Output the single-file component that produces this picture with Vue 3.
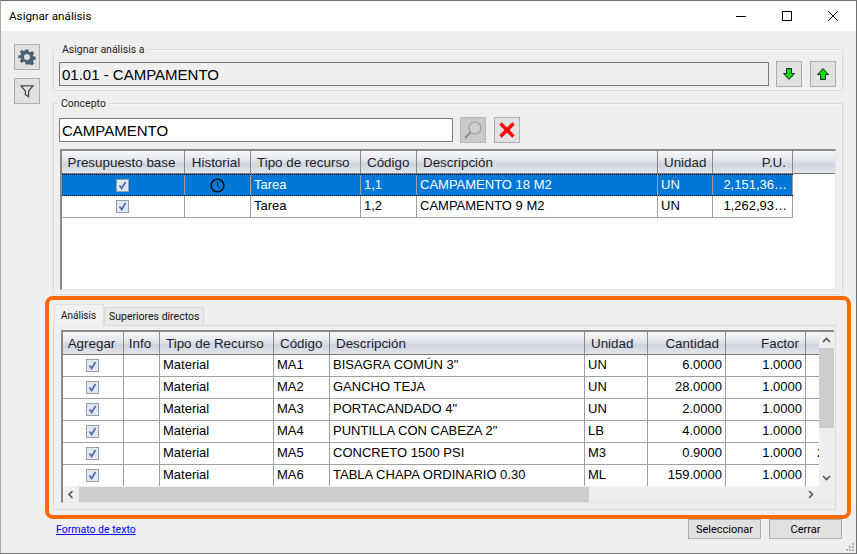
<script setup>
const conceptos = [
  { tipo: 'Tarea', codigo: '1,1', desc: 'CAMPAMENTO 18 M2', unidad: 'UN', pu: '2,151,36…', selected: true },
  { tipo: 'Tarea', codigo: '1,2', desc: 'CAMPAMENTO 9 M2', unidad: 'UN', pu: '1,262,93…', selected: false },
]

const analisis = [
  { codigo: 'MA1', desc: 'BISAGRA COMÚN 3"', unidad: 'UN', cantidad: '6.0000' },
  { codigo: 'MA2', desc: 'GANCHO TEJA', unidad: 'UN', cantidad: '28.0000' },
  { codigo: 'MA3', desc: 'PORTACANDADO 4"', unidad: 'UN', cantidad: '2.0000' },
  { codigo: 'MA4', desc: 'PUNTILLA CON CABEZA 2"', unidad: 'LB', cantidad: '4.0000' },
  { codigo: 'MA5', desc: 'CONCRETO 1500 PSI', unidad: 'M3', cantidad: '0.9000', extra: '2' },
  { codigo: 'MA6', desc: 'TABLA CHAPA ORDINARIO 0.30', unidad: 'ML', cantidad: '159.0000' },
]
</script>

<template>
  <div class="window">
    <!-- barra de titulo -->
    <header class="titlebar">
      <span class="title">Asignar análisis</span>
      <div class="controls">
        <svg width="46" height="30" viewBox="0 0 46 30"><path d="M18 15.5h10" stroke="#000" fill="none" /></svg>
        <svg width="46" height="30" viewBox="0 0 46 30"><rect x="18.5" y="10.5" width="9" height="9" stroke="#000" fill="none" /></svg>
        <svg width="46" height="30" viewBox="0 0 46 30"><path d="M18 10l10 10M28 10L18 20" stroke="#000" fill="none" /></svg>
      </div>
    </header>

    <div class="body">
      <aside class="rail">
        <button class="icon-btn">
          <svg width="18" height="18" viewBox="0 0 24 24">
            <path fill="#4c6272" fill-rule="evenodd" d="M10 2h4l.5 2.9 1.9.8 2.4-1.7 2.8 2.8-1.7 2.4.8 1.9 2.9.5v4l-2.9.5-.8 1.9 1.7 2.4-2.8 2.8-2.4-1.7-1.9.8L14 22h-4l-.5-2.9-1.9-.8-2.4 1.7-2.8-2.8 1.7-2.4-.8-1.9L.4 14v-4l2.9-.5.8-1.9L2.4 5.2 5.2 2.4l2.4 1.7 1.9-.8zM12 8a4 4 0 1 0 0 8 4 4 0 0 0 0-8z" />
          </svg>
        </button>
        <button class="icon-btn">
          <svg width="16" height="16" viewBox="0 0 20 20">
            <path d="M2.5 3.5h15L12 10v7l-4-2.500V10z" fill="#e4e4e4" stroke="#444" stroke-width="1.5" />
          </svg>
        </button>
      </aside>

      <main class="content">
        <fieldset class="group group-asignar">
          <legend>Asignar análisis a</legend>
          <div class="field-row">
            <input class="text-input readonly" value="01.01 - CAMPAMENTO" readonly />
            <button class="icon-btn">
              <svg width="14" height="14" viewBox="0 0 14 14"><path d="M4.5 1.5h5v5h3L7 12.5 1.5 6.5h3z" fill="#00e000" stroke="#222" /></svg>
            </button>
            <button class="icon-btn">
              <svg width="14" height="14" viewBox="0 0 14 14"><path d="M4.5 12.5h5v-5h3L7 1.5 1.5 7.5h3z" fill="#00e000" stroke="#222" /></svg>
            </button>
          </div>
        </fieldset>

        <fieldset class="group group-concepto">
          <legend>Concepto</legend>
          <div class="field-row">
            <input class="text-input concept" value="CAMPAMENTO" />
            <button class="icon-btn disabled">
              <svg width="22" height="22" viewBox="0 0 22 22">
                <circle cx="13" cy="9" r="6" fill="#cfcfcf" stroke="#a8a8a8" stroke-width="1.5" />
                <path d="M8.5 13.5L3 19" stroke="#8b968b" stroke-width="2.4" />
              </svg>
            </button>
            <button class="icon-btn">
              <svg width="18" height="18" viewBox="0 0 18 18"><path d="M2.5 2.5l13 13M15.5 2.5l-13 13" stroke="#f00" stroke-width="3.4" /></svg>
            </button>
          </div>

          <div class="grid-top">
            <div class="row head">
              <div class="cell center">Presupuesto base</div>
              <div class="cell center">Historial</div>
              <div class="cell hp">Tipo de recurso</div>
              <div class="cell hp">Código</div>
              <div class="cell hp">Descripción</div>
              <div class="cell hp">Unidad</div>
              <div class="cell right">P.U.</div>
              <div class="cell filler"></div>
            </div>
            <div v-for="c in conceptos" :key="c.codigo" class="row" :class="{ selected: c.selected }">
              <div class="cell center">
                <svg class="check" width="13" height="13" viewBox="0 0 13 13">
                  <rect x=".5" y=".5" width="12" height="12" fill="#e2e8f3" stroke="#9a9fa6" />
                  <path d="M3.5 6.5l2.2 3 3.8-6.5" fill="none" stroke="#4a6cab" stroke-width="1.7" />
                </svg>
              </div>
              <div class="cell center">
                <svg v-if="c.selected" width="15" height="15" viewBox="0 0 15 15">
                  <circle cx="7.5" cy="7.5" r="6.4" fill="none" stroke="#000" stroke-width="1.4" />
                  <path d="M7.5 4v3.500l2 1.800" fill="none" stroke="#000" />
                </svg>
              </div>
              <div class="cell">{{ c.tipo }}</div>
              <div class="cell">{{ c.codigo }}</div>
              <div class="cell">{{ c.desc }}</div>
              <div class="cell">{{ c.unidad }}</div>
              <div class="cell right">{{ c.pu }}</div>
            </div>
          </div>
        </fieldset>

        <section class="tabs">
          <div class="tab-strip">
            <div class="tab active">Análisis</div>
            <div class="tab">Superiores directos</div>
          </div>
          <div class="tab-panel">
            <div class="grid-bottom">
              <div class="viewport">
                <div class="row head">
                  <div class="cell center">Agregar</div>
                  <div class="cell center">Info</div>
                  <div class="cell hp">Tipo de Recurso</div>
                  <div class="cell hp">Código</div>
                  <div class="cell hp">Descripción</div>
                  <div class="cell hp">Unidad</div>
                  <div class="cell right">Cantidad</div>
                  <div class="cell right">Factor</div>
                  <div class="cell filler"></div>
                </div>
                <div v-for="a in analisis" :key="a.codigo" class="row">
                  <div class="cell center">
                    <svg class="check" width="13" height="13" viewBox="0 0 13 13">
                      <rect x=".5" y=".5" width="12" height="12" fill="#e2e8f3" stroke="#9a9fa6" />
                      <path d="M3.5 6.5l2.2 3 3.8-6.5" fill="none" stroke="#4a6cab" stroke-width="1.7" />
                    </svg>
                  </div>
                  <div class="cell"></div>
                  <div class="cell">Material</div>
                  <div class="cell">{{ a.codigo }}</div>
                  <div class="cell">{{ a.desc }}</div>
                  <div class="cell">{{ a.unidad }}</div>
                  <div class="cell right tight">{{ a.cantidad }}</div>
                  <div class="cell right tight">1.0000</div>
                  <div class="cell extra">{{ a.extra }}</div>
                </div>
              </div>
              <div class="vbar">
                <svg class="arrow" width="15" height="16" viewBox="0 0 15 16"><path d="M4 10l3.500-3.500L11 10" fill="none" stroke="#555" stroke-width="1.6" /></svg>
                <div class="vthumb"></div>
                <div class="spacer"></div>
                <svg class="arrow" width="15" height="16" viewBox="0 0 15 16"><path d="M4 6l3.500 3.500L11 6" fill="none" stroke="#555" stroke-width="1.6" /></svg>
              </div>
              <div class="hbar">
                <svg class="arrow" width="16" height="16" viewBox="0 0 16 16"><path d="M9.500 5L6 8.500l3.500 3.500" fill="none" stroke="#555" stroke-width="1.6" /></svg>
                <div class="hthumb"></div>
                <div class="spacer"></div>
                <svg class="arrow" width="17" height="16" viewBox="0 0 17 16"><path d="M7 5l3.500 3.500L7 12" fill="none" stroke="#555" stroke-width="1.6" /></svg>
              </div>
              <div class="corner"></div>
            </div>
          </div>
        </section>

        <footer class="footer">
          <a class="link" href="#">Formato de texto</a>
          <div class="footer-btns">
            <button class="btn">Seleccionar</button>
            <button class="btn">Cerrar</button>
          </div>
        </footer>
      </main>
    </div>

    <!-- resaltado naranja -->
    <div class="highlight"></div>

    <svg class="grip" width="10" height="10" viewBox="0 0 10 10" fill="#b5b5b5">
      <rect x="7" y="1" width="2" height="2" />
      <rect x="4" y="4" width="2" height="2" />
      <rect x="7" y="4" width="2" height="2" />
      <rect x="1" y="7" width="2" height="2" />
      <rect x="4" y="7" width="2" height="2" />
      <rect x="7" y="7" width="2" height="2" />
    </svg>
  </div>
</template>

<style scoped>
* {
  box-sizing: border-box;
}

.window {
  position: relative;
  width: 857px;
  height: 554px;
  display: flex;
  flex-direction: column;
  background: #efefef;
  border: 1px solid #707070;
  border-left-color: #a8a8a8;
  font-family: Roboto, "Noto Sans", sans-serif;
  color: #000;
  overflow: hidden;
}

.titlebar {
  height: 30px;
  flex: none;
  background: #fff;
  display: flex;
  align-items: center;
  justify-content: space-between;
  padding-left: 8px;
}

.title {
  font-size: 11.7px;
}

.controls {
  display: flex;
}

.controls svg {
  display: block;
}

.body {
  flex: 1;
  display: flex;
  min-height: 0;
}

.rail {
  width: 52px;
  flex: none;
  padding: 13px 0 0 13px;
  display: flex;
  flex-direction: column;
  gap: 8px;
}

.icon-btn {
  width: 26px;
  height: 26px;
  flex: none;
  padding: 0;
  border: 1px solid #adadad;
  background: #e1e1e1;
  display: flex;
  align-items: center;
  justify-content: center;
}

.icon-btn.disabled {
  background: #cacaca;
  border-color: #b8b8b8;
}

.content {
  width: 790px;
  padding-top: 11px;
  display: flex;
  flex-direction: column;
}

.group {
  margin: 0;
  border: 1px solid #dcdcdc;
  padding: 0 6px 0 5px;
  min-width: 0;
  box-shadow: inset 0 0 0 1px #f6f6f6;
}

.group legend {
  padding: 2px 3px 0;
  font-size: 10.5px;
  line-height: 12px;
  color: #1a1a1a;
}

.group-asignar {
  height: 49px;
  flex: none;
}

.group-asignar .field-row {
  margin-top: 5px;
}

.group-concepto {
  margin-top: 5px;
  height: 199px;
  flex: none;
}

.group-concepto .field-row {
  margin-top: 7px;
}

.group-concepto legend {
  margin-left: -1px;
}

.field-row {
  display: flex;
  align-items: center;
  gap: 8px;
}

.text-input {
  width: 710px;
  height: 24px;
  margin-right: -1px;
  border: 1px solid #7a7a7a;
  padding: 0 2px;
  font-family: "Liberation Sans", Arial, sans-serif;
  font-size: 15px;
  color: #000;
  outline: none;
  background: #fff;
}

.text-input.readonly {
  background: #efefef;
}

.text-input.concept {
  width: 394px;
}

/* grillas */
.row {
  display: grid;
  height: 22px;
  font-family: "Liberation Sans", Arial, sans-serif;
  font-size: 13px;
}

.cell {
  display: flex;
  align-items: center;
  padding: 0 3px 2px;
  border-right: 1px solid #a0a0a0;
  border-bottom: 1px solid #a0a0a0;
  white-space: nowrap;
  overflow: hidden;
}

.cell.center {
  justify-content: center;
  padding: 0 1px 0 0;
}

.cell.right {
  justify-content: flex-end;
  padding-right: 5px;
}

.head .cell {
  padding-bottom: 0;
  font-size: 13.4px;
  color: #1c1c2c;
  border-right: 1px solid #8a8a8a;
  border-bottom: 1px solid #7a7a7a;
  background: linear-gradient(#f7f8fa 0%, #e6e9ee 35%, #cfd5de 62%, #e3e6ea 100%);
}

.head .cell.center {
  padding-right: 3px;
}

.head .cell.hp {
  padding-left: 6px;
}

.head .cell.right {
  padding-right: 6px;
}

.head .cell.filler {
  border-right: none;
}

.grid-top {
  width: 776px;
  height: 141px;
  margin-top: 6px;
  margin-left: 1px;
  background: #fff;
  border: 2px solid #8a8a8a;
  border-right: 1px solid #e4e4e4;
  border-bottom: 1px solid #e4e4e4;
}

.grid-top .row {
  grid-template-columns: 123px 66px 110px 56px 241px 55px 80px;
}

.grid-top .row.head {
  grid-template-columns: 123px 66px 110px 56px 241px 55px 80px 42px;
  height: 23px;
}

.row.selected {
  position: relative;
  width: 731px;
  background: #0078d7;
  color: #fff;
}

.row.selected .cell {
  border-bottom: none;
}

.row.selected::after {
  content: "";
  position: absolute;
  inset: 0;
  border-top: 1px dotted #000;
  border-bottom: 1px dotted #000;
  pointer-events: none;
}

.tabs {
  margin-top: 9px;
  margin-right: 7px;
  flex: none;
}

.tab-strip {
  display: flex;
  align-items: flex-end;
  height: 21px;
  padding-left: 1px;
  font-size: 10.5px;
}

.tab {
  height: 18px;
  padding: 0 4px;
  display: flex;
  align-items: center;
  background: #e9e9e9;
  border: 1px solid #d8d8d8;
  border-bottom: none;
  color: #111;
}

.tab.active {
  height: 22px;
  width: 50px;
  margin-bottom: -1px;
  padding: 0 0 0 6px;
  font-size: 10px;
  position: relative;
  z-index: 1;
  background: #f2f2f2;
  border-color: #e0e0e0;
}

.tab-panel {
  height: 185px;
  border: 1px solid #dcdcdc;
  background: #efefef;
  padding: 4px 1px 0 7px;
}

.grid-bottom {
  height: 173px;
  display: grid;
  grid-template-columns: 1fr 15px;
  grid-template-rows: 1fr 16px;
  border-top: 2px solid #8a8a8a;
  border-left: 2px solid #8a8a8a;
  border-bottom: 1px solid #e4e4e4;
}

.viewport {
  background: #fff;
  overflow: hidden;
  min-width: 0;
}

.viewport .row {
  width: 800px;
  grid-template-columns: 61px 36px 114px 56px 255px 63px 78px 80px 57px;
}

.viewport .row.head {
  height: 23px;
}

.cell.right.tight {
  padding-right: 3px;
}

.cell.extra {
  padding-left: 11px;
}

.vbar {
  display: flex;
  flex-direction: column;
  background: #efefef;
}

.hbar {
  display: flex;
  align-items: flex-end;
  background: #efefef;
}

.arrow {
  flex: none;
  display: block;
}

.spacer {
  flex: 1;
}

.vthumb {
  height: 80px;
  background: #cdcdcd;
}

.hthumb {
  width: 510px;
  height: 15px;
  background: #cdcdcd;
}

.corner {
  background: #efefef;
}

.footer {
  display: flex;
  align-items: flex-start;
  justify-content: space-between;
  margin-top: 9px;
  padding: 0 1px 0 3px;
}

.link {
  font-size: 10.5px;
  line-height: 16px;
  margin-top: 3px;
  color: #0000ff;
}

.footer-btns {
  display: flex;
  gap: 8px;
}

.btn {
  width: 73px;
  height: 20px;
  padding: 0;
  border: 1px solid #adadad;
  background: #e1e1e1;
  font-family: Roboto, "Noto Sans", sans-serif;
  font-size: 11px;
  color: #000;
}

.highlight {
  position: absolute;
  left: 44px;
  top: 295px;
  width: 806px;
  height: 223px;
  border: 4px solid #ff6a00;
  border-radius: 8px;
  pointer-events: none;
}

.grip {
  position: absolute;
  right: 1px;
  bottom: 1px;
}
</style>

<style>
html, body {
  margin: 0;
  background: #efefef;
}
</style>
